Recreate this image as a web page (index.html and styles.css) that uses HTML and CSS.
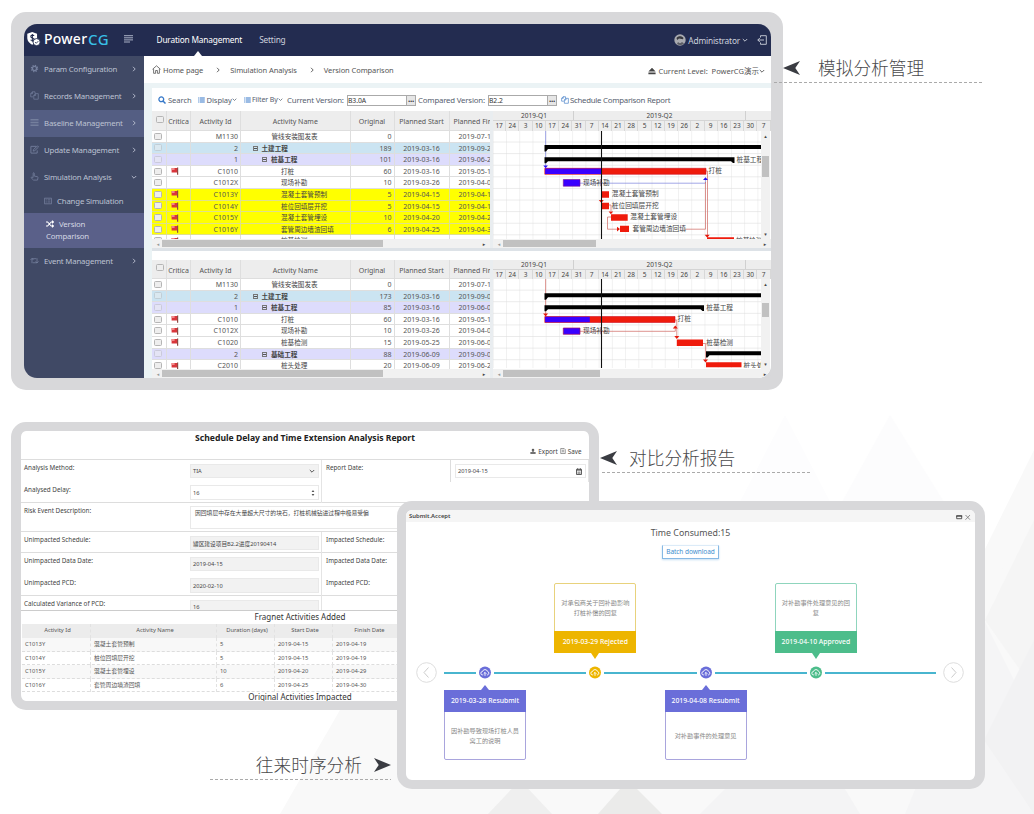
FILE: index.html
```html
<!DOCTYPE html>
<html lang="zh">
<head>
<meta charset="utf-8">
<title>PowerCG</title>
<link rel="stylesheet" href="styles.css">
</head>
<body>
<svg width="0" height="0" class="defs">
  <symbol id="i-flag" viewBox="0 0 8 8"><path d="M.6 1h5.600v4.600H.6z" fill="#d9363c"/><path d="M.6 1h3v2H.6z" fill="#f08a8a"/><path d="M6 .6h1.200v7.200H6z" fill="#8d4a44"/></symbol>
  <symbol id="i-chev" viewBox="0 0 6 6"><path d="M2 .8 4.200 3 2 5.200" fill="none" stroke="currentColor" stroke-width=".9"/></symbol>
  <symbol id="i-down" viewBox="0 0 6 6"><path d="M.8 2 3 4.200 5.200 2" fill="none" stroke="currentColor" stroke-width=".9"/></symbol>
  <symbol id="i-copy" viewBox="0 0 10 10"><path d="M3.500 6.500H.8V3L2.600.9h3v2M2.800.9v2h-2M4.200 9.100V5L6 2.900h3.200v6.200zM6.200 3v2h-2" fill="none" stroke="currentColor" stroke-width=".8"/></symbol>
  <symbol id="i-list" viewBox="0 0 9 8"><path d="M0 .5h1.600v1.400H0zM2.400.5H9v1.400H2.400zM0 3.200h1.600v1.400H0zM2.400 3.200H9v1.400H2.400zM0 5.900h1.600v1.400H0zM2.400 5.900H9v1.400H2.400z" fill="currentColor"/></symbol>
  <symbol id="i-cloud" viewBox="0 0 13 13"><circle cx="6.500" cy="6.500" r="6" fill="currentColor"/><path d="M4.600 8.900H4.100a1.700 1.700 0 0 1-.1-3.400 2.600 2.600 0 0 1 5-.1 1.800 1.800 0 0 1-.1 3.500H8.400M6.500 9.800V6.600M5.200 7.700l1.300-1.300 1.300 1.300" fill="none" stroke="#fff" stroke-width=".9"/></symbol>
  <symbol id="i-mark" viewBox="0 0 17 14"><path d="M0 7 17 0 12.300 7 17 14z" fill="currentColor"/></symbol>
  <pattern id="cells" x="492.8" y="130.9" width="13.23" height="11.6" patternUnits="userSpaceOnUse"><path d="M0 0V11.600M0 11.400H13.230" fill="none" stroke="#dedede" stroke-width=".8"/></pattern>
  <pattern id="cells2" x="492.8" y="279" width="13.23" height="11.6" patternUnits="userSpaceOnUse"><path d="M0 0V11.600M0 11.400H13.230" fill="none" stroke="#dedede" stroke-width=".8"/></pattern>
</svg>

<svg class="backdrop" viewBox="0 0 1034 814">
  <path d="M785 415 850 540H720z" fill="#fdfdfe"/><path d="M890 415 980 560H810z" fill="#fcfcfd"/>
  <path d="M1034 450 940 640 1034 700z" fill="#f9f9f9"/>
  <path d="M340 710 280 814H1034V500L960 660 380 700z" fill="#f9f9f9"/>
  <path d="M1034 520 985 620 1034 690z" fill="#f5f5f5"/>
  <path d="M984 620 1034 720V814H905z" fill="#f5f5f6"/>
  <path d="M1034 640 984 740 1034 814z" fill="#f2f2f3"/>
  <path d="M725 789 700 814H860L845 789z" fill="#f4f4f5"/>
  <path d="M520 780 488 814H552z" fill="#efefef"/><path d="M628 780 598 814H662z" fill="#ebebea"/>
</svg>

<section class="frame planner">
  <header class="topbar">
    <div class="brand">
      <svg class="shield" viewBox="0 0 16 18"><path d="M6.500 1 12 3v5c0 3.500-2.500 6-5.500 7.400C3.500 14 1 11.500 1 8V3z" fill="#fff"/><path d="M8.800 5.200C7 4.100 4.500 4.800 5 6.500s3.600.9 3.700 2.700c0 1.700-2.500 1.900-4 .8M6.700 3.500v8.600" fill="none" stroke="#232c50" stroke-width="1.200"/><circle cx="11.500" cy="12.500" r="4" fill="#fff" stroke="#232c50"/><path d="M9.800 12.500l1.300 1.300 2.300-2.400" fill="none" stroke="#232c50"/></svg>
      <span class="power">Power</span><span class="cg">CG</span>
      <svg class="burger" viewBox="0 0 10 8"><path d="M0 .7h9M0 2.800h9M0 4.900h9M0 7h6" stroke="#b9bfd2" stroke-width=".9"/></svg>
    </div>
    <nav class="tabs"><span class="tab on">Duration Management</span><span class="tab">Setting</span></nav>
    <div class="user">
      <svg class="avatar" viewBox="0 0 12 12"><circle cx="6" cy="6" r="5.700" fill="#a9abb0"/><path d="M2.500 4C4 1.500 8 1.500 9.500 4l-.6 1.300L5 4.600 3.200 6z" fill="#37383e"/><path d="M4 8c1 1.500 3 1.500 4 0l2 1.500A6 6 0 0 1 3 10z" fill="#5b5d64"/></svg>
      <span>Administrator</span><svg class="i6"><use href="#i-down"/></svg>
      <svg class="exit" viewBox="0 0 10 10"><path d="M3.500 2.500V.7h5.800v8.600H3.500V7.500M7 5H.8M2.800 3 .8 5l2 2" fill="none" stroke="currentColor" stroke-width=".9"/></svg>
    </div>
  </header>
  <div class="body">
    <aside class="side">
      <div class="item"><svg viewBox="0 0 10 10"><circle cx="5" cy="5" r="2.300" fill="none" stroke="currentColor" stroke-width="1.500"/><circle cx="5" cy="5" r="3.500" fill="none" stroke="currentColor" stroke-width="1.300" stroke-dasharray="1.400 1.350"/></svg><span>Param Configuration</span><svg class="i6"><use href="#i-chev"/></svg></div>
      <div class="item"><svg viewBox="0 0 10 10"><use href="#i-copy"/></svg><span>Records Management</span><svg class="i6"><use href="#i-chev"/></svg></div>
      <div class="item hot"><svg viewBox="0 0 10 10"><path d="M.5 2h9M.5 5h9M.5 8h9" stroke="currentColor" stroke-width="1.700"/></svg><span>Baseline Management</span><svg class="i6"><use href="#i-chev"/></svg></div>
      <div class="item"><svg viewBox="0 0 10 10"><path d="M7 1.500H1v7.500h7V6M3.500 6.800 4 5l4.300-4 1.200 1.200L5.300 6.300z" fill="none" stroke="currentColor"/></svg><span>Update Management</span><svg class="i6"><use href="#i-chev"/></svg></div>
      <div class="item"><svg viewBox="0 0 10 10"><path d="M3.500 6V1.300c0-.7 1.200-.7 1.200 0V4.500l3.700.8c.5.100.6.500.5 1L8.300 9H4L1.300 6.500c-.3-.6.500-1 .9-.7z" fill="none" stroke="currentColor" stroke-width=".9"/></svg><span>Simulation Analysis</span><svg class="i6"><use href="#i-down"/></svg></div>
      <div class="sub"><svg viewBox="0 0 10 10"><path d="M.5 1.500h9v7h-9z" fill="none" stroke="currentColor"/><path d="M2 3.600h1.500M4.500 3.600H8M2 6.200h1.500M4.500 6.200H8" stroke="currentColor"/></svg><span>Change Simulation</span></div>
      <div class="sub active"><svg viewBox="0 0 10 10"><path d="M0 2.500h2l4.500 5H9M0 7.500h2l4.500-5H9M7.600.8 9.400 2.500 7.600 4.200M7.600 5.800l1.800 1.700-1.800 1.700" fill="none" stroke="currentColor" stroke-width="1.300"/></svg><span>Version</span><br>Comparison</div>
      <div class="item"><svg viewBox="0 0 10 10"><path d="M2.200 8V3H7M.6 4.400 2.200 2.600l1.600 1.800M7.800 2.500v5H3M6.200 6l1.600 1.800L9.400 6" fill="none" stroke="currentColor" stroke-width=".9"/></svg><span>Event Management</span><svg class="i6"><use href="#i-chev"/></svg></div>
    </aside>
    <main class="main">
      <div class="crumbs">
        <svg class="home" viewBox="0 0 9 9"><path d="M.5 4.300 4.500.8l4 3.500M1.600 3.800v4.500h2V5.500h1.800v2.800h2V3.800" fill="none" stroke="currentColor" stroke-width=".8"/></svg>
        <span class="c1">Home page</span><svg class="i6"><use href="#i-chev"/></svg><span class="c2">Simulation Analysis</span><svg class="i6"><use href="#i-chev"/></svg><span class="c3">Version Comparison</span>
        <span class="level"><svg class="eject" viewBox="0 0 8 8"><path d="M4 .8 7.600 4.600H.4zM.4 5.600h7.200v1.700H.4z" fill="#444"/></svg>Current Level: &nbsp;PowerCG演示<svg class="i6"><use href="#i-down"/></svg></span>
      </div>
      <div class="sheet">
        <div class="tools">
          <svg class="mag" viewBox="0 0 8 8"><circle cx="3.300" cy="3.300" r="2.400" fill="none" stroke="#3779c9" stroke-width="1.300"/><path d="M5 5l2.500 2.500" stroke="#3779c9" stroke-width="1.500"/></svg><span class="t1">Search</span>
          <svg class="lst" viewBox="0 0 9 8"><use href="#i-list"/></svg><span class="t2">Display<svg class="caret"><use href="#i-down"/></svg></span>
          <svg class="lst" viewBox="0 0 9 8"><use href="#i-list"/></svg><span class="t3">Filter By<svg class="caret"><use href="#i-down"/></svg></span>
          <span class="big v1">Current Version:</span><span class="inp"><b>B3.0A</b><i>···</i></span>
          <span class="big v2">Compared Version:</span><span class="inp"><b>B2.2</b><i>···</i></span>
          <svg class="cp" viewBox="0 0 10 10"><use href="#i-copy"/></svg><span class="big v3">Schedule Comparison Report</span>
        </div>

        <div class="pane p1">
          <div class="table">
            <div class="tr th"><i class="cb"></i><span>Critica</span><span>Activity Id</span><span>Activity Name</span><span>Original</span><span>Planned Start</span><span>Planned Fin</span></div>
            <div class="rows">
              <div class="tr"><i class="cb"></i><span></span><span>M1130</span><span>管线安装图发表</span><span>0</span><span></span><span>2019-07-15</span></div>
              <div class="tr l1"><i class="cb"></i><span></span><span>2</span><span><em></em>土建工程</span><span>189</span><span>2019-03-16</span><span>2019-09-20</span></div>
              <div class="tr l2"><i class="cb"></i><span></span><span>1</span><span><em></em>桩基工程</span><span>101</span><span>2019-03-16</span><span>2019-06-24</span></div>
              <div class="tr"><i class="cb"></i><span><svg><use href="#i-flag"/></svg></span><span>C1010</span><span>打桩</span><span>60</span><span>2019-03-16</span><span>2019-05-14</span></div>
              <div class="tr"><i class="cb"></i><span></span><span>C1012X</span><span>现场补勘</span><span>10</span><span>2019-03-26</span><span>2019-04-04</span></div>
              <div class="tr y"><i class="cb"></i><span><svg><use href="#i-flag"/></svg></span><span>C1013Y</span><span>混凝土套管预制</span><span>5</span><span>2019-04-15</span><span>2019-04-19</span></div>
              <div class="tr y"><i class="cb"></i><span><svg><use href="#i-flag"/></svg></span><span>C1014Y</span><span>桩位回填层开挖</span><span>5</span><span>2019-04-15</span><span>2019-04-19</span></div>
              <div class="tr y"><i class="cb"></i><span><svg><use href="#i-flag"/></svg></span><span>C1015Y</span><span>混凝土套管埋设</span><span>10</span><span>2019-04-20</span><span>2019-04-29</span></div>
              <div class="tr y"><i class="cb"></i><span><svg><use href="#i-flag"/></svg></span><span>C1016Y</span><span>套管周边墙渣回填</span><span>6</span><span>2019-04-25</span><span>2019-04-30</span></div>
              <div class="tr"><i class="cb"></i><span><svg><use href="#i-flag"/></svg></span><span></span><span>桩基检测</span><span></span><span></span><span></span></div>
            </div>
            <div class="hbar"><b>◂</b><u class="long"></u><b>▸</b></div>
          </div>
          <div class="split"></div>
          <div class="gantt">
            <div class="quarters"><span>2019-Q1</span><span>2019-Q2</span><span></span></div>
            <div class="weeks"><span>17</span><span>24</span><span>3</span><span>10</span><span>17</span><span>24</span><span>31</span><span>7</span><span>14</span><span>21</span><span>28</span><span>5</span><span>12</span><span>19</span><span>26</span><span>2</span><span>9</span><span>16</span><span>23</span><span>30</span><span>7</span></div>
            <div class="chartrow">
              <svg class="chart" viewBox="493 131 268 108">
                <path d="M493 131h268v108H493z" fill="url(#cells)"/>
                <path d="M545.600 131V166M580 183.200H705.500V178" class="lb"/>
                <path d="M706 171h1.500V237M685 229.200h20.500V182M609 205h2v6M611 217h-3.500v12.200H619" class="lr"/>
                <path d="M544.500 145H761v4H548l-2 2.500h-1.500zM544.500 157.300H734.500V163H733l-2-1.700H548l-2 2h-1.500z"/>
                <path d="M544.800 168.300H706v6H544.800z" fill="#ef1b0c" stroke="#cf1020" stroke-width=".6"/><path d="M545.100 168.600h56v5.400h-56z" fill="#3900ff"/>
                <path d="M563.300 179.500h16.700v6.700h-16.700z" fill="#3900ff" stroke="#7a1090" stroke-width=".6"/>
                <path d="M601.500 191.200h7.500v6.500h-7.500zM601.500 202.700h7.500v6.500h-7.500zM611 214.200h16.700v6.500H611zM620 225.800h9v6.200h-9zM707 237.300h27v2h-27z" fill="#ef1b0c"/>
                <path d="M543.300 165.500h4.600l-2.300 2.700zM703 180h5l-2.500-2.800z" fill="#2b10f5"/>
                <path d="M598.800 200h5l-2.500 3zM608.600 211.500h4.600l-2.300 2.800zM617 226.700v4.800l3-2.400zM704.700 234.700h5l-2.500 3z" fill="#e6190c"/>
                <path d="M601.500 131V239" stroke="#111" stroke-width="1.100"/>
                <g class="lab"><text x="736.500" y="161.700">桩基工程</text><text x="708.500" y="173.300">打桩</text><text x="583" y="184.700">现场补勘</text><text x="611.800" y="196.100">混凝土套管预制</text><text x="611.800" y="207.700">桩位回填层开挖</text><text x="630.300" y="219.200">混凝土套管埋设</text><text x="632.500" y="230.700">套管周边墙渣回填</text><text x="736" y="243">桩基检测</text></g>
              </svg>
              <div class="vbar"><b>▴</b><u></u><b>▾</b></div>
            </div>
            <div class="hbar"><b>◂</b><u></u><b>▸</b></div>
          </div>
        </div>

        <div class="divider"></div>

        <div class="pane p2">
          <div class="table">
            <div class="tr th"><i class="cb"></i><span>Critica</span><span>Activity Id</span><span>Activity Name</span><span>Original</span><span>Planned Start</span><span>Planned Fin</span></div>
            <div class="rows">
              <div class="tr"><i class="cb"></i><span></span><span>M1130</span><span>管线安装图发表</span><span>0</span><span></span><span>2019-07-15</span></div>
              <div class="tr l1"><i class="cb"></i><span></span><span>2</span><span><em></em>土建工程</span><span>173</span><span>2019-03-16</span><span>2019-09-04</span></div>
              <div class="tr l2"><i class="cb"></i><span></span><span>1</span><span><em></em>桩基工程</span><span>85</span><span>2019-03-16</span><span>2019-06-08</span></div>
              <div class="tr"><i class="cb"></i><span><svg><use href="#i-flag"/></svg></span><span>C1010</span><span>打桩</span><span>60</span><span>2019-03-16</span><span>2019-05-14</span></div>
              <div class="tr"><i class="cb"></i><span><svg><use href="#i-flag"/></svg></span><span>C1012X</span><span>现场补勘</span><span>10</span><span>2019-03-26</span><span>2019-04-04</span></div>
              <div class="tr"><i class="cb"></i><span><svg><use href="#i-flag"/></svg></span><span>C1020</span><span>桩基检测</span><span>15</span><span>2019-05-25</span><span>2019-06-08</span></div>
              <div class="tr l2"><i class="cb"></i><span></span><span>2</span><span><em></em>基础工程</span><span>88</span><span>2019-06-09</span><span>2019-09-04</span></div>
              <div class="tr"><i class="cb"></i><span><svg><use href="#i-flag"/></svg></span><span>C2010</span><span>桩头处理</span><span>20</span><span>2019-06-09</span><span>2019-06-28</span></div>
            </div>
            <div class="hbar"><b>◂</b><u class="long"></u><b>▸</b></div>
          </div>
          <div class="split"></div>
          <div class="gantt">
            <div class="quarters"><span>2019-Q1</span><span>2019-Q2</span><span></span></div>
            <div class="weeks"><span>17</span><span>24</span><span>3</span><span>10</span><span>17</span><span>24</span><span>31</span><span>7</span><span>14</span><span>21</span><span>28</span><span>5</span><span>12</span><span>19</span><span>26</span><span>2</span><span>9</span><span>16</span><span>23</span><span>30</span><span>7</span></div>
            <div class="chartrow">
              <svg class="chart" viewBox="493 279 268 89">
                <path d="M493 279h268v89H493z" fill="url(#cells2)"/>
                <path d="M545.600 279V314M580 331.300H675.300V326M675 320h1.800v18M703 343.500h2.700V361" class="lr"/>
                <path d="M544.500 293.300H761v4H548l-2 2.500h-1.500zM544.500 305.300H704V311H702.500l-2-1.700H548l-2 2h-1.500zM706 351.300H761v4H709.500l-2 2.200H706z"/>
                <path d="M544.800 316.500H675v6H544.800z" fill="#ef1b0c" stroke="#cf1020" stroke-width=".6"/><path d="M545.100 316.800h44.700v5.400h-44.700z" fill="#3900ff"/>
                <path d="M563.300 328h16.700v6.300h-16.700z" fill="#3900ff" stroke="#a01060" stroke-width=".7"/>
                <path d="M676.800 339.500H703v6.500H676.800zM706 362.300h35.500v5H706z" fill="#ef1b0c"/>
                <path d="M543.100 313.500h5l-2.500 3zM672.800 328.500h5l-2.500-3zM674.300 336h5l-2.500 3zM703 359.500h5l-2.500 3z" fill="#e6190c"/>
                <path d="M601.500 279V368" stroke="#111" stroke-width="1.100"/>
                <g class="lab"><text x="706.300" y="309.900">桩基工程</text><text x="677.500" y="321.400">打桩</text><text x="583" y="333.200">现场补勘</text><text x="706.300" y="344.700">桩基检测</text><text x="743.500" y="367.700">桩头处理</text></g>
              </svg>
              <div class="vbar"><b>▴</b><u></u><b>▾</b></div>
            </div>
            <div class="hbar"><b>◂</b><u></u><b>▸</b></div>
          </div>
        </div>
      </div>
    </main>
  </div>
</section>

<section class="frame report">
  <h1>Schedule Delay and Time Extension Analysis Report</h1>
  <div class="actions"><svg viewBox="0 0 8 8"><path d="M4 .5 6.300 3H5v2H3V3H1.700zM.5 5.500h7v2h-7z" fill="#444"/></svg>Export <svg viewBox="0 0 8 8"><path d="M1 .6h4.500L7 2.200v5.200H1zM2.500 3h3M2.500 5h3" fill="none" stroke="#555" stroke-width=".8"/></svg>Save</div>
  <div class="form">
    <div class="fr h1r"><label>Analysis Method:</label><div class="cell"><span class="field off">TIA<svg class="i6"><use href="#i-down"/></svg></span></div><label>Report Date:</label><div class="cell last"><span class="field">2019-04-15<svg class="cal" viewBox="0 0 7 8"><path d="M.6 1.500h5.800v6H.6z" fill="none" stroke="#444"/><path d="M.6 2.500h5.800M2 0v2M5 0v2M2.500 4v3M4.500 4v3" stroke="#444" stroke-width=".9"/></svg></span></div></div>
    <div class="fr h2r"><label>Analysed Delay:</label><div class="cell"><span class="field">16<svg class="spin" viewBox="0 0 4 8"><path d="M.6 3 2 1l1.400 2zM.6 5 2 7l1.400-2z" fill="#555"/></svg></span></div><label></label></div>
    <div class="fr h3r wide"><label>Risk Event Description:</label><div class="cell"><span class="field">因回填层中存在大量超大尺寸的块石，打桩机械钻进过程中极易受偏</span></div></div>
    <div class="fr h4r"><label>Unimpacted Schedule:</label><div class="cell"><span class="field off">罐区建设项目B2.2进度20190414</span></div><label>Impacted Schedule:</label></div>
    <div class="fr h5r"><label>Unimpacted Data Date:</label><div class="cell"><span class="field off">2019-04-15</span></div><label>Impacted Data Date:</label></div>
    <div class="fr h6r"><label>Unimpacted PCD:</label><div class="cell"><span class="field off">2020-02-10</span></div><label>Impacted PCD:</label></div>
    <div class="fr h7r"><label>Calculated Variance of PCD:</label><div class="cell"><span class="field off">16</span></div><label></label></div>
  </div>
  <h2>Fragnet Activities Added</h2>
  <div class="frag">
    <div class="fg fh"><span>Activity Id</span><span>Activity Name</span><span>Duration (days)</span><span>Start Date</span><span>Finish Date</span><span></span></div>
    <div class="fg"><span>C1013Y</span><span>混凝土套管预制</span><span>5</span><span>2019-04-15</span><span>2019-04-19</span><span></span></div>
    <div class="fg"><span>C1014Y</span><span>桩位回填层开挖</span><span>5</span><span>2019-04-15</span><span>2019-04-19</span><span></span></div>
    <div class="fg"><span>C1015Y</span><span>混凝土套管埋设</span><span>10</span><span>2019-04-20</span><span>2019-04-29</span><span></span></div>
    <div class="fg"><span>C1016Y</span><span>套管周边墙渣回填</span><span>6</span><span>2019-04-25</span><span>2019-04-30</span><span></span></div>
  </div>
  <h2 class="second">Original Activities Impacted</h2>
</section>

<section class="frame dialog">
  <div class="dtitle"><span>Submit.Accept</span><svg viewBox="0 0 15 7"><path d="M.7 2h5v2.700h-5z" fill="none" stroke="#333" stroke-width=".8"/><path d="M.2 1.900h6" stroke="#333"/><path d="M9.500 1 14 5.700M14 1 9.500 5.700" stroke="#777" stroke-width=".8"/></svg></div>
  <div class="consumed">Time Consumed:15</div>
  <div class="btnrow"><button>Batch download</button></div>
  <div class="timeline">
    <svg class="nav" viewBox="0 0 21 21"><circle cx="10.500" cy="10.500" r="9.800" fill="none" stroke="#ddd"/><path d="M12.500 5.500 8 10.500l4.500 5" fill="none" stroke="#ccc"/></svg>
    <div class="track">
      <div class="stop below violet"><article><h3>2019-03-28 Resubmit</h3><p>因补勘导致现场打桩人员窝工的说明</p></article><svg viewBox="0 0 13 13"><use href="#i-cloud"/></svg></div>
      <div class="stop above amber"><article><p>对承包商关于回补勘影响打桩补偿的回复</p><h3>2019-03-29 Rejected</h3></article><svg viewBox="0 0 13 13"><use href="#i-cloud"/></svg></div>
      <div class="stop below violet"><article><h3>2019-04-08 Resubmit</h3><p>对补勘事件的处理意见</p></article><svg viewBox="0 0 13 13"><use href="#i-cloud"/></svg></div>
      <div class="stop above green"><article><p>对补勘事件处理意见的回复</p><h3>2019-04-10 Approved</h3></article><svg viewBox="0 0 13 13"><use href="#i-cloud"/></svg></div>
    </div>
    <svg class="nav" viewBox="0 0 21 21"><circle cx="10.500" cy="10.500" r="9.800" fill="none" stroke="#ddd"/><path d="M8.500 5.500l4.500 5-4.500 5" fill="none" stroke="#ccc"/></svg>
  </div>
</section>

<div class="callout k1"><svg><use href="#i-mark"/></svg><span>模拟分析管理</span></div>
<div class="callout k2"><svg><use href="#i-mark"/></svg><span>对比分析报告</span></div>
<div class="callout k3"><span>往来时序分析</span><svg><use href="#i-mark"/></svg></div>
</body>
</html>
```

FILE: styles.css
```css
*,*::before,*::after{box-sizing:border-box}
body{margin:0;width:1034px;height:814px;position:relative;overflow:hidden;background:#fff;font-family:"Noto Sans","Noto Sans CJK SC",sans-serif;font-size:7px;color:#555}
.defs{position:absolute}
.backdrop{position:absolute;left:0;top:0;width:1034px;height:814px}
svg{flex:none;display:block;overflow:hidden}
.i6{width:6px;height:6px}
.frame{position:absolute;overflow:hidden;background:#fff;border:solid #d8d8da}

/* planner window */
.planner{left:11px;top:12px;width:772px;height:378px;border-width:12px 12px 12px 13px;border-radius:15px;display:flex;flex-direction:column;background:#d8d8da}
.topbar{height:32px;flex:none;background:#232c50;display:flex;color:#cdd1dd;font-size:8.300px;letter-spacing:-.17px;border-radius:13px 13px 0 0}
.brand{width:120px;display:flex;align-items:center;padding:0 0 3px 2px}
.shield{width:15px;height:16px;margin-right:3px}
.power{font-size:14px;font-weight:500;color:#fff;letter-spacing:.25px;width:44px}
.cg{font-size:15px;font-weight:500;color:#38bfe6;width:36px;letter-spacing:.5px}
.burger{width:10px;height:8px}
.tabs{display:flex;gap:17px;padding-left:12.500px}
.tab{line-height:32px;position:relative}
.tab.on{color:#fff}
.tab.on::after{content:"";position:absolute;left:50%;margin-left:-5px;bottom:0;border:4.500px solid transparent;border-top:0;border-bottom:5px solid #fff}
.user{margin-left:auto;display:flex;align-items:center;padding-right:4px}
.avatar{width:12px;height:12px;margin-right:2px}
.user .i6{margin:0 9px 0 2px}
.exit{width:10px;height:10px}
.body{flex:1;min-height:0;display:flex;border-radius:0 0 13px 13px;overflow:hidden}
.side{width:120px;flex:none;background:#404965;color:#bcc2d2;font-size:7.800px;letter-spacing:-.17px}
.item{height:27px;display:flex;align-items:center;padding:0 7px 2px 6px}
.item>svg:first-child{width:9px;height:9px;margin-right:5px;color:#747f9d}
.item span{flex:1;white-space:nowrap}
.item.hot{background:#545e83}
.sub{height:22px;display:flex;align-items:center;padding:0 0 2px 20px;white-space:nowrap}
.sub svg{width:8px;height:8px;margin-right:5px;color:#76809e}
.sub.active{height:35px;background:#5a6089;display:block;padding:4.500px 0 0 22px;line-height:12.500px;color:#d5d8e4}
.sub.active svg{display:inline-block;vertical-align:-1px;color:#fff}
.main{flex:1;min-width:0;background:#ebf3f5;display:flex;flex-direction:column}
.crumbs{height:27px;background:#fff;display:flex;align-items:center;padding:0 6px 0 8px;font-size:7.500px;letter-spacing:-.08px;color:#555}
.home{width:9px;height:9px;margin-right:2px}
.c1,.c2{margin-right:12px}.c2,.c3{margin-left:9px}
.level{margin-left:auto;display:flex;align-items:center;padding-top:2px;letter-spacing:.02px}
.eject{width:8px;height:8px;margin-right:2px}
.sheet{margin:5px 0 0 8px;flex:1;background:#fff;min-height:0}
.tools{height:23px;display:flex;align-items:center;padding-left:6px;font-size:7.600px;letter-spacing:-.08px;color:#56606e;white-space:nowrap}
.mag{width:8px;height:8px;margin-right:2px}
.t1{width:30px}.t2{width:37px;display:flex;align-items:center}.t3{width:35px;display:flex;align-items:center;font-size:7px}
.caret{width:5px;height:5px}
.lst{width:7px;height:6px;color:#3779c9;margin-right:1.500px}
.big{font-size:7.800px;letter-spacing:-.18px;flex:none}
.v1{width:60px}.v2{width:72px;padding-left:2px}
.inp{width:69px;height:11px;flex:none;border:1px solid #aaa;display:flex;justify-content:space-between;align-items:center;font-size:6.800px;margin-top:2px;color:#333}
.inp b{font-weight:400}
.inp i{font-style:normal;font-weight:700;background:#e6e6e6;border-left:1px solid #aaa;width:9px;line-height:9px;text-align:center;font-size:8px;letter-spacing:-.3px}
.cp{width:8px;height:8px;color:#3b78c4;margin:0 1.500px 0 3.500px}
.v3{letter-spacing:-.25px}
.pane{display:flex;height:137px}
.p2{height:118.500px}
.table{width:338px;display:flex;flex-direction:column}
.tr{display:grid;grid-template-columns:15px 24px 50px 109.500px 44px 55px 40.500px;height:11.600px;line-height:11.600px;color:#555;overflow:hidden}
.tr>span{border-right:1px solid #dedede;border-bottom:1px solid #dedede;white-space:nowrap;overflow:hidden;line-height:12px;height:11.600px}
.tr>span:nth-child(2) svg{width:8px;height:8px;margin:1.500px 0 0 4px}
.tr>span:nth-child(3){text-align:right;padding-right:2px}
.tr>span:nth-child(4){padding-left:40px;font-size:6.600px;line-height:11px}
.tr:not(.th)>span:nth-child(4){font-family:"Noto Sans CJK SC",sans-serif;color:#444}
.tr:first-child:not(.th)>span:nth-child(4){padding-left:30.500px}
.tr>span:nth-child(5){text-align:right;padding-right:2px}
.tr>span:nth-child(6){text-align:center}
.tr>span:nth-child(7){padding-left:9px;border-right:0}
.cb{border:solid #dedede;border-width:0 1px 1px 0;display:flex;align-items:center;padding-left:2px}
.cb::before{content:"";width:7.500px;height:7px;border:1px solid #b5b5b5;border-radius:1.500px;background:#eee}
.tr.th{height:20px;background:#ededed;flex:none}
.p2 .tr.th{height:19.500px}
.tr.th>span{line-height:21px;height:auto;text-align:center;padding:0;font-size:7px!important}
.tr.th>span:nth-child(7){padding-left:4px;text-align:left}
.tr.th .cb{padding-left:4px}
.tr.th .cb::before{margin-top:-3px}
.l1{background:#cbe4f2}.l2{background:#dddcfc}.y{background:#ff0}
.y>span,.y>.cb{border-color:#dfe08c}
.l1>.cb::before,.l2>.cb::before{opacity:.45}
.tr.l1>span:nth-child(4){padding-left:11.500px;font-weight:700}
.tr.l2>span:nth-child(4){padding-left:21px;font-weight:700}
em{display:inline-block;width:5px;height:5px;border:.8px solid #777;background:linear-gradient(#555,#555) center/3px 1px no-repeat;margin-right:4px;vertical-align:0}
.rows{flex:1;min-height:0;overflow:hidden;background:#fff}
.hbar{height:9px;flex:none;background:#f1f1f1;display:flex;align-items:center;padding:0 2px}
.hbar b{font:5px/8px "DejaVu Sans",sans-serif;width:8px;text-align:center;color:#444}
.hbar b:first-child{color:#999}
.hbar b:last-child{margin-left:auto}
.hbar u{height:7px;background:#c1c1c1;width:93px}
.hbar u.long{width:221px}
.p2 .gantt .hbar u{width:97px}
.split{width:3px;background:#e9edf0}
.gantt{flex:1;min-width:0;overflow:hidden;display:flex;flex-direction:column}
.quarters,.weeks{background:#ededed;display:flex;flex:none;height:10px;line-height:10px;overflow:hidden;border-bottom:1px solid #d4d4d4;font-size:6.500px;color:#444}
.quarters span{text-align:center;border-right:1px solid #d0d0d0;flex:none;width:172px}
.quarters span:first-child{width:81px;padding-left:2px}
.quarters span:last-child{width:24px;border:0}
.weeks span{width:13.230px;flex:none;text-align:center;border-right:1px solid #d8d8d8}
.weeks{border:0}
.p2 .weeks{height:9.500px}
.chartrow{flex:1;min-height:0;display:flex;overflow:hidden}
.chart{width:268px;height:108px}
.p2 .chart{height:89px}
.lb,.lr{fill:none;stroke:#7b83dc;stroke-width:.7}.lr{stroke:#cf6660}
.lab{font:6.700px "Noto Sans CJK SC",sans-serif;fill:#444}
.vbar{width:9px;background:#f1f1f1;display:flex;flex-direction:column;align-items:center}
.vbar b{font:5px/10px "DejaVu Sans",sans-serif;color:#444}
.vbar u{width:7px;height:21px;background:#c1c1c1;margin-top:15px}
.p2 .vbar u{height:14px;margin-top:14px}
.vbar b:last-child{margin-top:auto}
.divider{height:11.500px;border-top:3px solid #dde2e7}

/* report window */
.report{left:11px;top:422px;width:588px;height:288px;border-width:9px 10px 9px 10px;border-radius:15px;color:#444;font-size:6.300px}
h1,h2,h3,p{margin:0}
h1{font-size:8.600px;line-height:15px;text-align:center;color:#222;white-space:nowrap}
.actions{display:flex;justify-content:flex-end;align-items:center;height:13px;padding:0 7.500px 3px 0;gap:2px}
.actions svg{width:6px;height:6px}
.form{border-top:1px solid #ddd;height:152px;border-bottom:1px solid #ccc;overflow:hidden}
.fr{display:grid;grid-template-columns:167px 134px 128px 1fr}
.fr.wide{grid-template-columns:167px 1fr}
.fr label{padding:3px 0 0 4px;line-height:10px}
.fr label:first-child{padding-left:3px}
.fr .cell{border-right:1px solid #e4e4e4;padding:3.500px 2px 3px 2px}
.fr .cell.last{padding-left:4px;border-left:1px solid #ddd}
.fr .field{display:flex;justify-content:space-between;align-items:center;border:1px solid #e9e9e9;height:14.500px;padding:1px 3px 0 2px;font-size:5.700px;background:#fff;white-space:nowrap}
.fr .off{background:#f2f2f2}
.cal{width:6px;height:7px}
.spin{width:4px;height:8px}
.h1r{height:21.500px}.h2r{height:21.500px;border-bottom:1px solid #ddd}
.h3r{height:29px;border-bottom:1px solid #ddd}
.fr.h3r .cell{padding:2.500px 2px 0 2px}
.fr.h3r .field{height:23px;align-items:flex-start;border-right:0;padding-left:4px;font-size:5.800px}
.h4r{height:21px;border-bottom:1px solid #ddd}.h5r{height:21.500px}.h6r{height:21.500px;border-bottom:1px solid #ddd}.h7r{height:20px}
h2{font-weight:400;font-size:8px;line-height:12.500px;text-align:center;padding-right:10px;color:#333}
.fg{display:grid;grid-template-columns:69px 126px 58px 58px 71px 1fr;height:13.600px;line-height:13.600px;border-bottom:1px dashed #ddd;font-size:5.800px;margin-left:1px;color:#555}
.fg span{padding-left:3px;border-right:1px dashed #e2e2e2}
.fg:nth-child(even){background:#f8f8f8}
.fg.fh{height:14.500px;background:#ececec;text-align:center;border:0}
.second{line-height:10px}

/* approval dialog */
.dialog{left:397px;top:501px;width:588px;height:288px;border-width:9px 10px 9px 9px;border-radius:15px;color:#555}
.dtitle{height:12px;background:#f5f5f5;display:flex;align-items:center;justify-content:space-between;padding:0 4px 0 3px;font-size:5.900px;font-weight:600;color:#444}
.dtitle svg{width:15px;height:7px;margin-top:2px}
.consumed{text-align:center;font-size:8.800px;line-height:22px;height:23px}
.btnrow{text-align:center;height:15px}
button{display:inline-block;height:14px;width:57px;padding:0;font:6.500px/10px "Noto Sans",sans-serif;letter-spacing:-.05px;color:#3e8ece;background:#fff;border:1px solid #87b9e4;border-top-color:#dcebf8;box-shadow:0 1px 2px #c8dff2;vertical-align:top}
.timeline{display:flex;align-items:center;height:225px;padding:0 11px 0 10px}
.nav{width:21px;height:21px}
.track{flex:1;display:flex;height:225px;margin:0 7px;background:linear-gradient(#48b5cf,#48b5cf) center/100% 2px no-repeat}
.stop{width:82px;margin-right:28.300px;position:relative;flex:none;display:flex;justify-content:center;align-items:center}
.stop>svg{width:18px;height:13px;padding:0 2.500px;background:#fff}
article{position:absolute;left:0;width:82px;border:1px solid #a9a5dd;border-radius:2px;background:#fff;text-align:center}
.above article{bottom:133px;height:69px}
.below article{top:130px;height:70px}
.stop h3{color:#fff;font-size:6.800px;font-weight:500;line-height:22px;height:22px;white-space:nowrap;margin:-1px;position:relative}
.stop p{color:#888;font-size:6.200px;line-height:10.300px;height:48px;display:flex;align-items:center;padding:0 5px;justify-content:center}
.below p{height:50px}
.stop h3::after{content:"";position:absolute;left:50%;margin-left:-4px;border:4px solid transparent}
.above h3::after{top:100%;border-top-width:6px;border-bottom:0}
.below h3::after{bottom:100%;border-bottom-width:5.500px;border-top:0}
.violet{color:#6a6ed9}.amber{color:#edb500}.green{color:#4dbd8b}
.violet h3{background:#6a6ed9}.amber h3{background:#edb500}.green h3{background:#4dbd8b}
.violet h3::after{border-bottom-color:#6a6ed9}.amber h3::after{border-top-color:#edb500}.green h3::after{border-top-color:#4dbd8b}
.amber article{border-color:#e8d27c}.green article{border-color:#8fd5bd}

/* callouts */
.callout{position:absolute;height:27px;display:flex;align-items:center;gap:12px;padding-bottom:4px;font:300 17.700px/23px "Noto Sans CJK SC",sans-serif;color:#4a4a4c;background:linear-gradient(90deg,#aaa 60%,transparent 0) left bottom/5px 1px repeat-x}
.callout svg{width:17px;height:14px;color:#3a3c42}
.k1{left:774px;top:56px;width:210px;padding-left:9px;gap:18px}
.k2{left:602px;top:446px;width:209px}.k2 svg{margin-left:-2px}
.k3{left:210px;top:753px;width:181px;justify-content:flex-end}
.k3 svg{transform:scaleX(-1)}
```
